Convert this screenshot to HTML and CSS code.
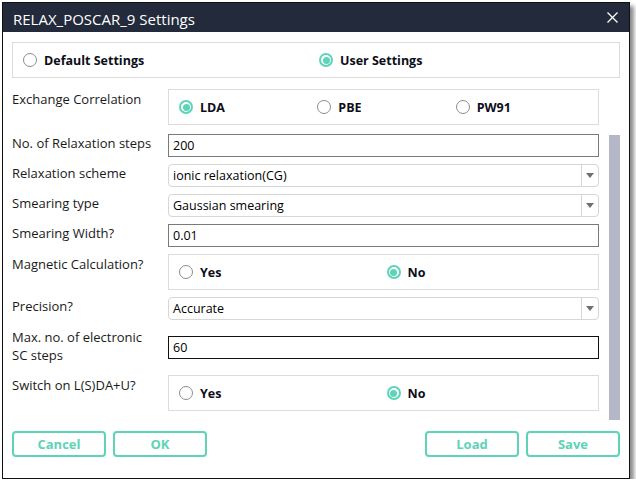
FILE: index.html
```html
<!DOCTYPE html>
<html>
<head>
<meta charset="utf-8">
<link rel="stylesheet" href="styles.css">
</head>
<body>
<div class="window">
  <div class="titlebar">
    <span class="title">RELAX_POSCAR_9 Settings</span>
    <svg class="close" width="11" height="11" viewBox="0 0 11 11"><path d="M0.5 0.5L10.5 10.5M10.5 0.5L0.5 10.5" stroke="#ffffff" stroke-width="1.3" fill="none"/></svg>
  </div>
  <div class="content">
    <div class="box mode">
      <label class="radio"><span class="dot"></span>Default Settings</label>
      <label class="radio"><span class="dot on"></span>User Settings</label>
    </div>
    <div class="scroll">
      <div class="form">
        <div class="row boxrow first">
          <div class="label">Exchange Correlation</div>
          <div class="box three">
            <label class="radio"><span class="dot on"></span>LDA</label>
            <label class="radio"><span class="dot"></span>PBE</label>
            <label class="radio"><span class="dot"></span>PW91</label>
          </div>
        </div>
        <div class="row">
          <div class="label">No. of Relaxation steps</div>
          <div class="input">200</div>
        </div>
        <div class="row">
          <div class="label">Relaxation scheme</div>
          <div class="select"><span class="val">ionic relaxation(CG)</span><span class="arrow"></span></div>
        </div>
        <div class="row">
          <div class="label">Smearing type</div>
          <div class="select"><span class="val">Gaussian smearing</span><span class="arrow"></span></div>
        </div>
        <div class="row">
          <div class="label">Smearing Width?</div>
          <div class="input">0.01</div>
        </div>
        <div class="row boxrow">
          <div class="label">Magnetic Calculation?</div>
          <div class="box two">
            <label class="radio"><span class="dot"></span>Yes</label>
            <label class="radio"><span class="dot on"></span>No</label>
          </div>
        </div>
        <div class="row">
          <div class="label">Precision?</div>
          <div class="select"><span class="val">Accurate</span><span class="arrow"></span></div>
        </div>
        <div class="row tall">
          <div class="label">Max. no. of electronic<br>SC steps</div>
          <div class="input focus">60</div>
        </div>
        <div class="row boxrow">
          <div class="label">Switch on L(S)DA+U?</div>
          <div class="box two">
            <label class="radio"><span class="dot"></span>Yes</label>
            <label class="radio"><span class="dot on"></span>No</label>
          </div>
        </div>
      </div>
      <div class="scrolltrack"><div class="thumb"></div></div>
    </div>
    <div class="buttons">
      <div class="group">
        <button class="btn">Cancel</button>
        <button class="btn">OK</button>
      </div>
      <div class="group">
        <button class="btn">Load</button>
        <button class="btn">Save</button>
      </div>
    </div>
  </div>
</div>
</body>
</html>
```
FILE: styles.css
```css
html, body {
  margin: 0;
  padding: 0;
  background: #ffffff;
}
body {
  font-family: "Open Sans", "Noto Sans", sans-serif;
  font-size: 13px;
  color: #111111;
}
.window {
  margin: 2px 0 0 2px;
  width: 626px;
  height: 475px;
  border: 1px solid #111111;
  background: #ffffff;
  box-shadow: 4px 4px 4px rgba(0, 0, 0, 0.45);
  display: flex;
  flex-direction: column;
}
.titlebar {
  height: 29px;
  background: #222a3b;
  display: flex;
  align-items: center;
  justify-content: space-between;
  padding: 0 11px 0 10px;
}
.title {
  color: #ffffff;
  font-size: 15px;
  line-height: 18px;
  margin-top: 2px;
}
.close {
  display: block;
}
.content {
  padding: 10px 9px 0 9px;
  display: flex;
  flex-direction: column;
}
.box {
  border: 1px solid #dcdcdc;
  box-sizing: border-box;
  display: grid;
  align-items: center;
  padding: 0 4px 0 10px;
}
.mode {
  height: 36px;
  grid-template-columns: 1fr 1fr;
}
.three {
  grid-template-columns: 1fr 1fr 1fr;
}
.two {
  grid-template-columns: 1fr 1fr;
}
.radio {
  display: flex;
  align-items: center;
  gap: 7px;
  font-weight: bold;
  font-size: 12.5px;
  color: #0d0d1a;
}
.dot {
  width: 14px;
  height: 14px;
  box-sizing: border-box;
  border-radius: 50%;
  border: 1px solid #8c8c8c;
  display: flex;
  align-items: center;
  justify-content: center;
}
.dot.on {
  border: 2px solid #5dd3b8;
}
.dot.on::after {
  content: "";
  width: 7px;
  height: 7px;
  border-radius: 50%;
  background: #5dd3b8;
}
.scroll {
  display: flex;
  margin-top: 11px;
  height: 331px;
}
.form {
  width: 587px;
  display: flex;
  flex-direction: column;
  gap: 7px;
}
.row {
  display: flex;
  align-items: flex-start;
}
.label {
  width: 156px;
  flex: none;
  line-height: 18px;
  color: #1a1a1a;
}
.boxrow .label {
  padding-top: 1px;
}
.boxrow .box {
  height: 36px;
}
.row > .box, .row > .input, .row > .select {
  width: 431px;
  flex: none;
}
.first + .row {
  margin-top: 2px;
}
.input {
  height: 23px;
  box-sizing: border-box;
  border: 1px solid #7a7a7a;
  padding: 0 4px;
  line-height: 21px;
  font-size: 12.5px;
  color: #000000;
}
.input.focus {
  border-color: #111111;
}
.row.tall {
  height: 35px;
  margin-top: 6px;
}
.row.tall .input {
  margin-top: 3px;
}
.row.tall .label {
  margin-top: -5px;
}
.select {
  height: 23px;
  box-sizing: border-box;
  border: 1px solid #d6d6d6;
  border-radius: 4px;
  display: flex;
  align-items: center;
}
.val {
  flex: 1;
  padding: 0 4px;
  line-height: 21px;
  font-size: 12.5px;
  color: #000000;
}
.arrow {
  width: 16px;
  height: 100%;
  border-left: 1px solid #d6d6d6;
  display: flex;
  align-items: center;
  justify-content: center;
}
.arrow::after {
  content: "";
  width: 0;
  height: 0;
  border-left: 4px solid transparent;
  border-right: 4px solid transparent;
  border-top: 5px solid #707070;
}
.scrolltrack {
  margin-left: 10px;
  width: 11px;
  padding-top: 46px;
  display: flex;
  flex-direction: column;
}
.thumb {
  flex: 1;
  background: #b4b7c8;
}
.buttons {
  margin-top: 11px;
  display: flex;
  justify-content: space-between;
}
.group {
  display: flex;
  gap: 7px;
}
.btn {
  width: 94px;
  height: 26px;
  box-sizing: border-box;
  border: 2px solid #5dd3b8;
  border-radius: 4px;
  background: #ffffff;
  color: #5dd3b8;
  font-family: "Open Sans", "Noto Sans", sans-serif;
  font-weight: bold;
  font-size: 13px;
  padding: 0;
}
```
